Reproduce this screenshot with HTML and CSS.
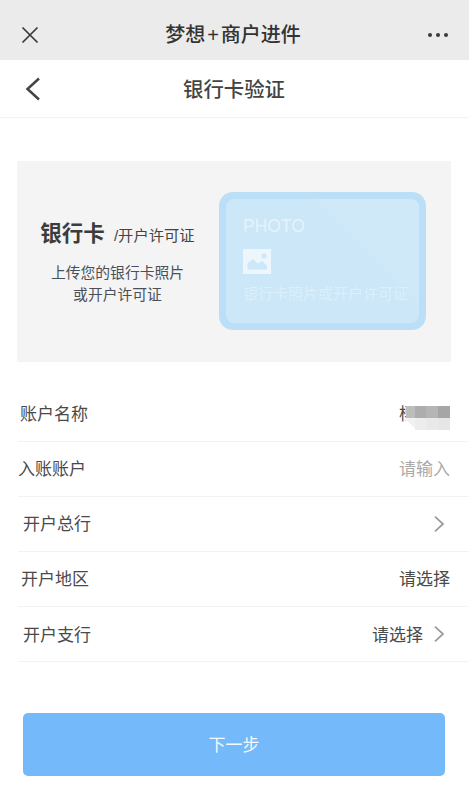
FILE: index.html
```html
<!DOCTYPE html>
<html lang="zh-CN">
<head>
<meta charset="utf-8">
<title>银行卡验证</title>
<link rel="stylesheet" href="styles.css">
</head>
<body>
<div class="page">
  <header class="topbar">
    <svg class="icon-close" width="18" height="18" viewBox="0 0 18 18"><path d="M1.500 1.500L16.500 16.500M16.500 1.500L1.500 16.500" fill="none" stroke="#3a3a3a" stroke-width="1.7"/></svg>
    <div class="topbar-title">梦想<span class="plus">+</span>商户进件</div>
    <svg class="icon-more" width="22" height="6" viewBox="0 0 22 6"><circle cx="3" cy="3" r="2" fill="#3a3a3a"/><circle cx="11" cy="3" r="2" fill="#3a3a3a"/><circle cx="19" cy="3" r="2" fill="#3a3a3a"/></svg>
  </header>
  <nav class="navbar">
    <svg class="icon-back" width="16" height="24" viewBox="0 0 16 24"><path d="M14 1.500L2.500 12L14 22.500" fill="none" stroke="#444" stroke-width="2.500"/></svg>
    <div class="navbar-title">银行卡验证</div>
  </nav>
  <section class="upload">
    <div class="upload-text">
      <div class="upload-head"><strong>银行卡</strong><span>/开户许可证</span></div>
      <p>上传您的银行卡照片<br>或开户许可证</p>
    </div>
    <div class="card">
      <div class="card-inner">
        <div class="card-photo">PHOTO</div>
        <svg class="card-icon" width="28" height="25" viewBox="0 0 28 25"><path fill-rule="evenodd" d="M0 0H28V25H0ZM4.500 20.500H24V17L19.500 12L14.500 14.500L10 10L4.500 14Z" fill="#ecf6fc"/><circle cx="21" cy="7" r="2.700" fill="#cde8f8"/></svg>
        <div class="card-caption">银行卡照片或开户许可证</div>
      </div>
    </div>
  </section>
  <section class="form">
    <div class="row row-a"><span class="label">账户名称</span><span class="value name">杨<span class="mosaic"><i></i><i></i><i></i><i></i><i></i><i></i><i></i><i></i></span></span></div>
    <div class="row row-b"><span class="label">入账账户</span><span class="value hint">请输入</span></div>
    <div class="row row-c row-up"><span class="label">开户总行</span><svg class="chev" width="10" height="16" viewBox="0 0 10 16"><path d="M1 0.700L9 8L1 15.300" fill="none" stroke="#999" stroke-width="1.700"/></svg></div>
    <div class="row row-d"><span class="label">开户地区</span><span class="value">请选择</span></div>
    <div class="row row-c"><span class="label">开户支行</span><span class="value with-chev">请选择<svg class="chev" width="10" height="16" viewBox="0 0 10 16"><path d="M1 0.700L9 8L1 15.300" fill="none" stroke="#999" stroke-width="1.700"/></svg></span></div>
  </section>
  <button class="next" type="button">下一步</button>
</div>
</body>
</html>
```
FILE: styles.css
```css
* { box-sizing: border-box; }
html, body { margin: 0; padding: 0; background: #fff; }
body { font-family: "Liberation Sans", "Noto Sans CJK SC", sans-serif; color: #444; }
.page { width: 469px; height: 794px; overflow: hidden; display: flex; flex-direction: column; }

.topbar { height: 60px; flex: none; background: #ebebeb; display: flex; align-items: center; justify-content: space-between; padding: 10px 20px 0 21px; }
.topbar-title { font-size: 20px; font-weight: 500; color: #333; line-height: 26px; margin-top: -1px; }
.plus { margin: 0 2px; }

.navbar { height: 58px; flex: none; display: flex; align-items: center; justify-content: center; position: relative; border-bottom: 1px solid #f3f3f3; }
.navbar-title { font-size: 20.400px; font-weight: 500; color: #444; padding: 0 1px 2px 0; }
.icon-back { position: absolute; left: 25px; top: 17px; }

.upload { margin: 43px 18px 0 17px; height: 201px; flex: none; background: #f4f4f4; display: flex; padding: 31px 25px 0 0; justify-content: space-between; }
.upload-text { width: 201px; text-align: center; padding-top: 25px; }
.upload-head { display: flex; align-items: baseline; justify-content: center; color: #444; margin-top: -1px; }
.upload-head strong { font-size: 21.500px; font-weight: 700; color: #3c3c3c; margin-right: 9px; }
.upload-head span { font-size: 15.300px; }
.upload-text p { margin: 15px 0 0; font-size: 14.800px; line-height: 22px; color: #4a5058; }

.card { width: 207px; height: 138px; background: #bbdff7; border-radius: 14px; padding: 7px; }
.card-inner { height: 100%; border-radius: 8px; padding: 15px 0 0 17px; background: linear-gradient(45deg, #cbe7f8 0%, #cbe7f8 67%, #cfe9f8 67.300%, #cfe9f8 100%); }
.card-photo { font-size: 17.500px; line-height: 24px; color: #e6f3fb; }
.card-icon { display: block; margin-top: 11px; }
.card-caption { margin-top: 10px; font-size: 15px; line-height: 20px; color: #dceffa; white-space: nowrap; }

.form { margin: 24px 0 0 18px; flex: none; }
.row { height: 55px; display: flex; align-items: center; justify-content: space-between; border-bottom: 1px solid #f3f3f3; padding: 0 19px 2px 0; font-size: 17px; color: #4a4a4a; }
.row-a { padding-left: 2px; height: 56px; }
.row-b { padding-bottom: 3px; }
.row-c { padding-left: 5px; padding-right: 25px; }
.row-up { padding-bottom: 3px; }
.row-d { padding-left: 3px; padding-bottom: 3px; }
.value { display: inline-flex; align-items: center; }
.hint { color: #aaa; }
.with-chev { gap: 11px; }
.chev { display: block; margin-top: 3px; }
.with-chev .chev { margin-top: 2px; }
.name { position: relative; width: 51px; }
.mosaic { position: absolute; left: 7px; top: 6px; width: 44px; height: 24px; display: grid; grid-template-columns: 9px 11px 12px 12px; grid-template-rows: 12px 12px; }
.mosaic i:nth-child(1) { background: #bdbdbd; }
.mosaic i:nth-child(2) { background: #adadad; }
.mosaic i:nth-child(3) { background: #b5b5b5; }
.mosaic i:nth-child(4) { background: #a6a6a6; }
.mosaic i:nth-child(5) { background: linear-gradient(45deg, #fff 50%, #f1f1f1 50%); }
.mosaic i:nth-child(6) { background: #ededed; }
.mosaic i:nth-child(7) { background: #e9e9e9; }
.mosaic i:nth-child(8) { background: #e6e6e6; }

.next { display: block; flex: none; margin: 51px 0 0 23px; width: 422px; height: 63px; border: 0; border-radius: 5px; padding: 0 0 2px; background: #74b9fa; color: #f3f9ff; font: inherit; font-size: 17px; }
```
